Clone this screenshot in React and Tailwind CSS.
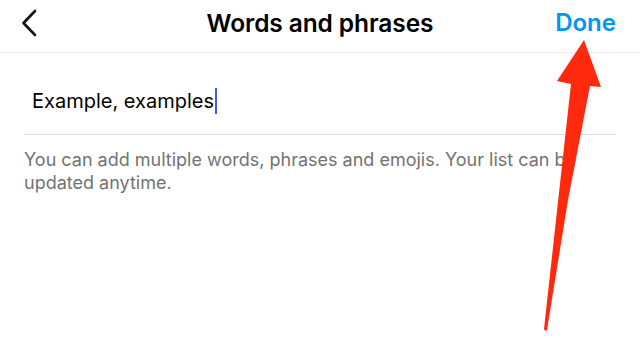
import React from "react";

export default function App() {
  return (
    <div className="relative w-[640px] h-[338px] bg-white overflow-hidden" style={{ fontFamily: "Inter, 'Noto Sans', sans-serif" }}>
      <div className="h-[53px] grid grid-cols-[1fr_auto_1fr] items-center pl-5 pr-6 border-b border-[#efefef]">
        <svg width="18" height="28" viewBox="0 0 18 28" className="-mt-[6px]">
          <path d="M15 2 L3.5 14 L15 26" fill="none" stroke="#111" strokeWidth="2.6" strokeLinecap="round" strokeLinejoin="round" />
        </svg>
        <div className="text-[24.5px] font-semibold text-black -mt-[6px] tracking-[-0.1px] translate-x-[2px]">Words and phrases</div>
        <div className="text-[24px] font-semibold text-[#0095f6] -mt-[6px] justify-self-end">Done</div>
      </div>
      <div className="px-6">
        <div className="h-[82px] flex items-center pt-[14px] pl-2 border-b border-[#dbdbdb]">
          <span className="text-[20px] text-black">Example, examples</span>
          <span className="inline-block w-[2px] h-[26px] bg-[#3d5ce0] ml-[1px]"></span>
        </div>
        <p className="mt-[13px] text-[18px] leading-[23px] text-[#737373] pr-6">
          You can add multiple words, phrases and emojis. Your list can be updated anytime.
        </p>
      </div>
      <svg className="absolute left-0 top-0" width="640" height="338" viewBox="0 0 640 338">
        <path d="M584 40 L557 81 L571 84 L544 329 Q545 332 547 330 L568 200 L590 86 L601 87 Z" fill="#ff2a0e" />
      </svg>
    </div>
  );
}
